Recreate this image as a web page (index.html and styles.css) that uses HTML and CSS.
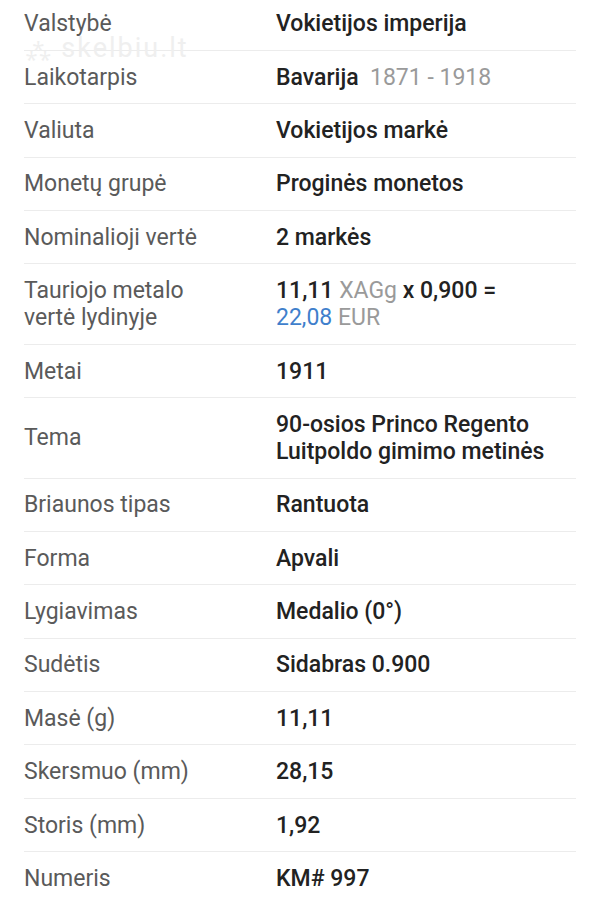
FILE: index.html
```html
<!DOCTYPE html>
<html lang="lt">
<head>
<meta charset="utf-8">
<link rel="stylesheet" href="styles.css">
</head>
<body>
<div class="page">
  <div class="watermark"><span class="wm-icon">⁂</span> skelbiu.lt</div>
  <dl class="specs">
    <div class="row"><dt>Valstybė</dt><dd>Vokietijos imperija</dd></div>
    <div class="row"><dt>Laikotarpis</dt><dd>Bavarija <span class="muted">&nbsp;1871 - 1918</span></dd></div>
    <div class="row"><dt>Valiuta</dt><dd>Vokietijos markė</dd></div>
    <div class="row"><dt>Monetų grupė</dt><dd>Proginės monetos</dd></div>
    <div class="row"><dt>Nominalioji vertė</dt><dd>2 markės</dd></div>
    <div class="row"><dt>Tauriojo metalo vertė lydinyje</dt><dd>11,11 <span class="muted">XAGg</span> x 0,900 =<br><span class="blue">22,08</span> <span class="muted">EUR</span></dd></div>
    <div class="row"><dt>Metai</dt><dd>1911</dd></div>
    <div class="row"><dt>Tema</dt><dd>90-osios Princo Regento Luitpoldo gimimo metinės</dd></div>
    <div class="row"><dt>Briaunos tipas</dt><dd>Rantuota</dd></div>
    <div class="row"><dt>Forma</dt><dd>Apvali</dd></div>
    <div class="row"><dt>Lygiavimas</dt><dd>Medalio (0°)</dd></div>
    <div class="row"><dt>Sudėtis</dt><dd>Sidabras 0.900</dd></div>
    <div class="row"><dt>Masė (g)</dt><dd>11,11</dd></div>
    <div class="row"><dt>Skersmuo (mm)</dt><dd>28,15</dd></div>
    <div class="row"><dt>Storis (mm)</dt><dd>1,92</dd></div>
    <div class="row"><dt>Numeris</dt><dd>KM# 997</dd></div>
  </dl>
</div>
</body>
</html>
```
FILE: styles.css
```css
html, body {
  margin: 0;
  padding: 0;
  background: #fff;
}
body {
  font-family: Roboto, "Noto Sans", sans-serif;
  overflow: hidden;
}
.page {
  position: relative;
  padding: 0 24px;
  margin-top: -2.4px;
}
.watermark {
  position: absolute;
  left: 26px;
  top: 34px;
  font-size: 27px;
  color: #efefef;
  letter-spacing: 2px;
  pointer-events: none;
  z-index: 2;
}
.wm-icon {
  font-size: 22px;
}
.specs {
  margin: 0;
}
.row {
  display: grid;
  grid-template-columns: 252px 1fr;
  align-items: center;
  padding: 12.7px 0;
  border-bottom: 1px solid #ececec;
  font-size: 23px;
  line-height: 27px;
}
dt {
  color: #5a5a5a;
  margin: 0;
  padding-right: 40px;
}
dd {
  margin: 0;
  color: #222;
  font-weight: 500;
}
.muted {
  color: #9a9a9a;
  font-weight: 400;
}
.blue {
  color: #3f7fcc;
  font-weight: 400;
}
```
